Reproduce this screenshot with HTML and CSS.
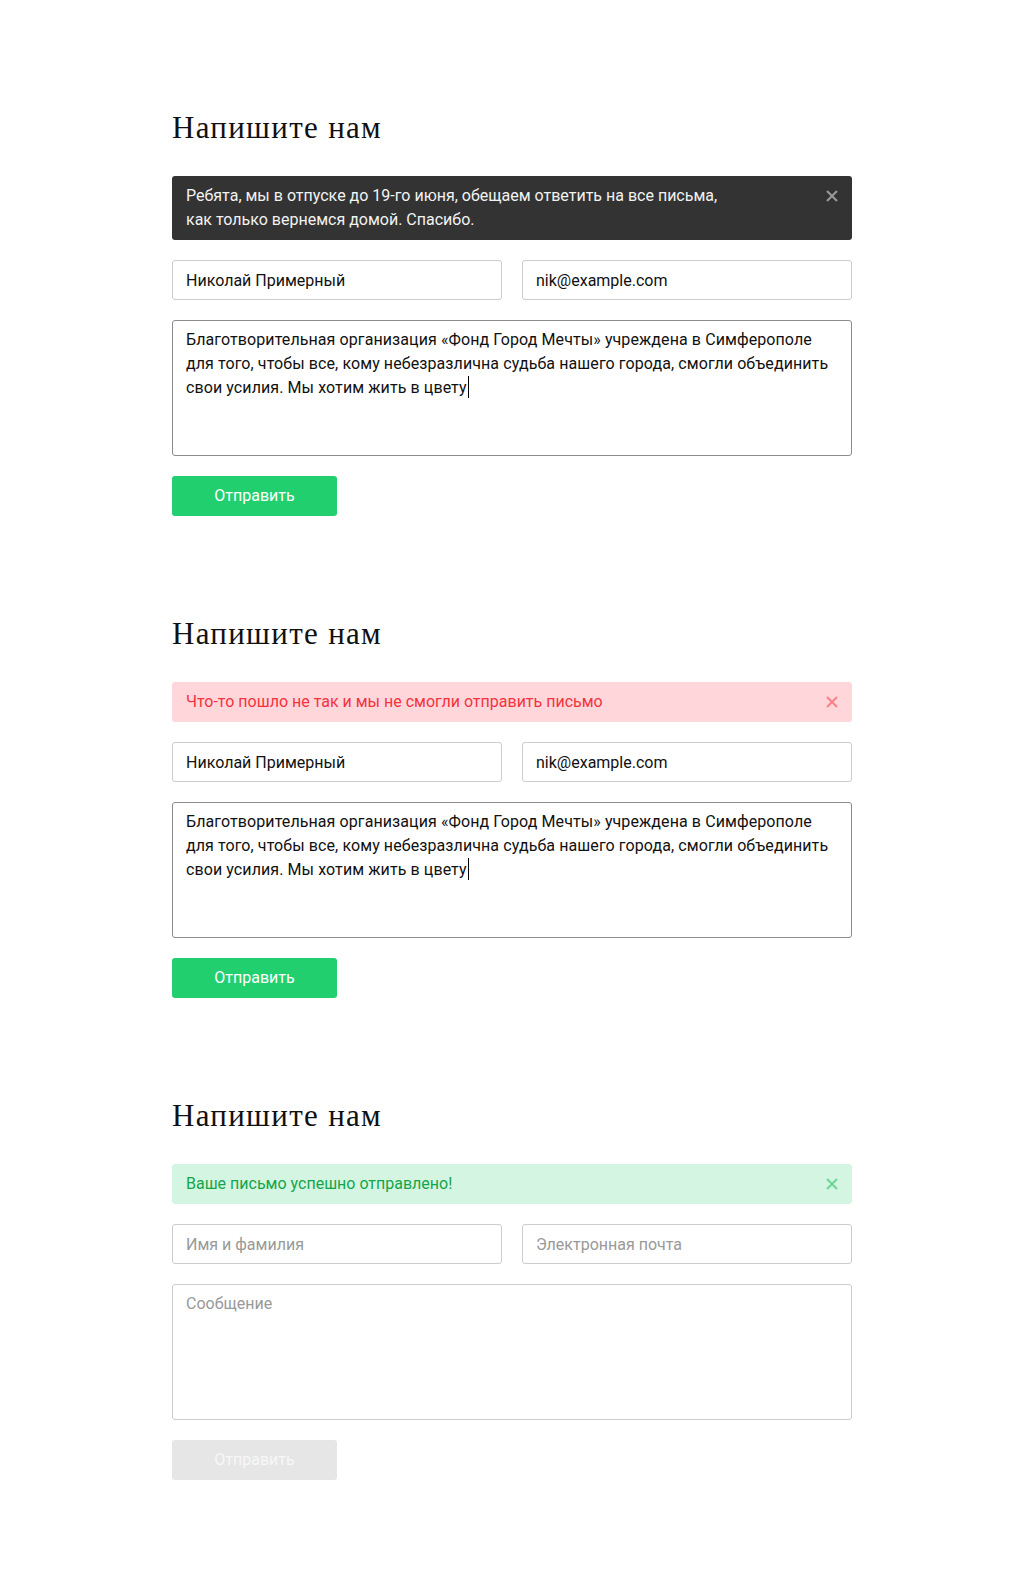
FILE: index.html
```html
<!DOCTYPE html>
<html lang="ru">
<head>
<meta charset="utf-8">
<title>Напишите нам</title>
<link rel="stylesheet" href="styles.css">
</head>
<body>
<main class="page">

  <section class="feedback">
    <h2 class="feedback__title">Напишите нам</h2>
    <div class="alert alert--info">
      <p class="alert__text">Ребята, мы в отпуске до 19-го июня, обещаем ответить на все письма,<br>как только вернемся домой. Спасибо.</p>
      <button class="alert__close" type="button" aria-label="Закрыть"><svg viewBox="0 0 12 12" width="12" height="12"><path d="M1 1L11 11M11 1L1 11"/></svg></button>
    </div>
    <div class="feedback__row">
      <input class="field" type="text" value="Николай Примерный" placeholder="Имя и фамилия">
      <input class="field" type="email" value="nik@example.com" placeholder="Электронная почта">
    </div>
    <div class="field field--area field--focus">Благотворительная организация «Фонд Город Мечты» учреждена в Симферополе<br>для того, чтобы все, кому небезразлична судьба нашего города, смогли объединить<br>свои усилия. Мы хотим жить в цвету<span class="caret"></span></div>
    <button class="btn" type="button">Отправить</button>
  </section>

  <section class="feedback">
    <h2 class="feedback__title">Напишите нам</h2>
    <div class="alert alert--error">
      <p class="alert__text">Что-то пошло не так и мы не смогли отправить письмо</p>
      <button class="alert__close" type="button" aria-label="Закрыть"><svg viewBox="0 0 12 12" width="12" height="12"><path d="M1 1L11 11M11 1L1 11"/></svg></button>
    </div>
    <div class="feedback__row">
      <input class="field" type="text" value="Николай Примерный" placeholder="Имя и фамилия">
      <input class="field" type="email" value="nik@example.com" placeholder="Электронная почта">
    </div>
    <div class="field field--area field--focus">Благотворительная организация «Фонд Город Мечты» учреждена в Симферополе<br>для того, чтобы все, кому небезразлична судьба нашего города, смогли объединить<br>свои усилия. Мы хотим жить в цвету<span class="caret"></span></div>
    <button class="btn" type="button">Отправить</button>
  </section>

  <section class="feedback">
    <h2 class="feedback__title">Напишите нам</h2>
    <div class="alert alert--success">
      <p class="alert__text">Ваше письмо успешно отправлено!</p>
      <button class="alert__close" type="button" aria-label="Закрыть"><svg viewBox="0 0 12 12" width="12" height="12"><path d="M1 1L11 11M11 1L1 11"/></svg></button>
    </div>
    <div class="feedback__row">
      <input class="field" type="text" placeholder="Имя и фамилия">
      <input class="field" type="email" placeholder="Электронная почта">
    </div>
    <textarea class="field field--area" placeholder="Сообщение"></textarea>
    <button class="btn btn--disabled" type="button" disabled>Отправить</button>
  </section>

</main>
</body>
</html>
```

FILE: styles.css
```css
* {
  box-sizing: border-box;
}

body {
  margin: 0;
  background: #fff;
  font-family: Roboto, "Noto Sans", sans-serif;
  font-size: 16px;
  line-height: 24px;
  color: #111;
}

.page {
  width: 680px;
  margin: 0 auto;
  padding: 110px 0 64px;
  display: flex;
  flex-direction: column;
  gap: 100px;
}

.feedback {
  display: flex;
  flex-direction: column;
  align-items: flex-start;
}

.feedback__title {
  margin: 0 0 30px;
  font-family: "Liberation Serif", "Times New Roman", serif;
  font-weight: normal;
  font-size: 31px;
  line-height: 36px;
  letter-spacing: 1.3px;
  color: #111;
}

.alert {
  align-self: stretch;
  display: flex;
  align-items: flex-start;
  justify-content: space-between;
  padding: 8px 14px;
  border-radius: 3px;
  margin-bottom: 20px;
}

.alert__text {
  margin: 0;
}

.alert__close {
  flex: none;
  width: 12px;
  height: 24px;
  padding: 0;
  border: 0;
  background: none;
  display: flex;
  align-items: center;
  justify-content: center;
  cursor: pointer;
}

.alert__close svg {
  display: block;
  fill: none;
  stroke: currentColor;
  stroke-width: 2;
}

.alert--info {
  background: #333;
  color: #f2f2f2;
}
.alert--info .alert__close { color: #9a9a9a; }

.alert--error {
  background: #ffd7da;
  color: #f5323f;
}
.alert--error .alert__close { color: #ff7f88; }

.alert--success {
  background: #d3f5e1;
  color: #13a54a;
}
.alert--success .alert__close { color: #6fd697; }

.feedback__row {
  align-self: stretch;
  display: grid;
  grid-template-columns: 1fr 1fr;
  gap: 20px;
  margin-bottom: 20px;
}

.field {
  display: block;
  width: 100%;
  height: 40px;
  margin: 0;
  padding: 7px 13px;
  border: 1px solid #ccc;
  border-radius: 3px;
  background: #fff;
  font-family: Roboto, "Noto Sans", sans-serif;
  font-size: 16px;
  line-height: 24px;
  color: #111;
  outline: none;
}

.field::placeholder {
  color: #999;
}

.field--area {
  height: 136px;
  padding: 7px 13px;
  resize: none;
  margin-bottom: 20px;
}

.field--focus {
  border-color: #8c8c8c;
  letter-spacing: 0.09px;
  white-space: nowrap;
}

.caret {
  display: inline-block;
  width: 1px;
  height: 22px;
  margin-left: 1px;
  background: #000;
  vertical-align: -5px;
}

.btn {
  width: 165px;
  height: 40px;
  padding: 0;
  border: 0;
  border-radius: 3px;
  background: #22cf6e;
  color: #fff;
  font-family: Roboto, "Noto Sans", sans-serif;
  font-size: 16px;
  line-height: 24px;
  cursor: pointer;
}

.btn--disabled {
  background: #e6e6e6;
  color: #f7f7f7;
  cursor: default;
}
```
